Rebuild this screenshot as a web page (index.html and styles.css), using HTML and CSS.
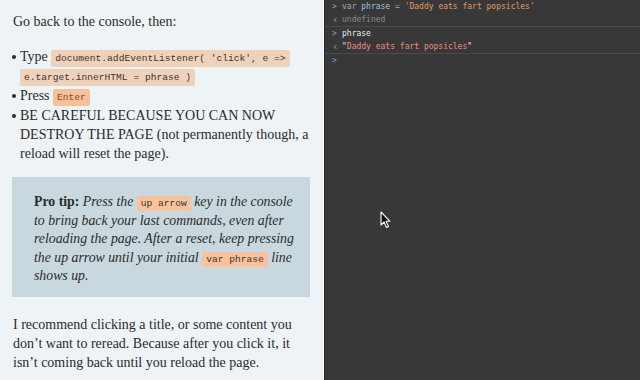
FILE: index.html
```html
<!DOCTYPE html>
<html>
<head>
<meta charset="utf-8">
<link rel="stylesheet" href="styles.css">
</head>
<body>
<div class="app">
  <main class="article">
    <p class="para first">Go back to the console, then:</p>
    <ul class="steps">
      <li>Type <code class="chip">document.addEventListener( 'click', e =&gt; e.target.innerHTML = phrase )</code></li>
      <li>Press <code class="chip key">Enter</code></li>
      <li>BE CAREFUL BECAUSE YOU CAN NOW DESTROY THE PAGE (not permanently though, a reload will reset the page).</li>
    </ul>
    <aside class="tip">
      <p><strong>Pro tip:</strong> Press the <code class="chip warm">up arrow</code> key in the console to bring back your last commands, even after reloading the page. After a reset, keep pressing the up arrow until your initial <code class="chip warm">var phrase</code> line shows up.</p>
    </aside>
    <p class="para">I recommend clicking a title, or some content you don’t want to reread. Because after you click it, it isn’t coming back until you reload the page.</p>
  </main>
  <section class="console">
    <div class="row"><span class="pr">&gt;</span><span><span class="kw">var</span> <span class="var">phrase</span> <span class="kw">=</span> <span class="str">'Daddy eats fart popsicles'</span></span></div>
    <div class="row sep"><span class="pr back">&lsaquo;</span><span class="undef">undefined</span></div>
    <div class="row"><span class="pr">&gt;</span><span class="plain">phrase</span></div>
    <div class="row sep"><span class="pr back">&lsaquo;</span><span><span class="plain">"</span><span class="res">Daddy eats fart popsicles</span><span class="plain">"</span></span></div>
    <div class="row"><span class="pr blue">&gt;</span><span></span></div>
    <svg class="cursor" width="12" height="18" viewBox="0 0 12 18"><path d="M1 1 L1 14 L4 11 L6.5 16.5 L8.5 15.5 L6 10.3 L10 10.3 Z" fill="#111" stroke="#fff" stroke-width="1.1" stroke-linejoin="round"/></svg>
  </section>
</div>
</body>
</html>
```
FILE: styles.css
```css
html, body {
  margin: 0;
  padding: 0;
  height: 380px;
  overflow: hidden;
}
.app {
  display: flex;
  width: 640px;
  height: 380px;
}
.article {
  width: 299px;
  flex: none;
  background: #eef3f6;
  padding: 0 11px 0 13px;
  border-right: 1px solid #ffffff;
  font-family: "Liberation Serif", "DejaVu Serif", serif;
  font-size: 14px;
  line-height: 19px;
  color: #2b2b2b;
  overflow: hidden;
}
.para {
  margin: 0;
}
.para.first {
  margin-top: 12px;
  margin-bottom: 16px;
}
.steps {
  margin: 0 0 14px 0;
  padding: 0 0 0 7px;
  list-style: none;
}
.steps li {
  position: relative;
  margin-bottom: 1px;
}
.steps li::before {
  content: "";
  position: absolute;
  left: -8px;
  top: 8px;
  width: 4px;
  height: 4px;
  border-radius: 50%;
  background: #2b2b2b;
}
.chip {
  font-family: "Liberation Mono", "DejaVu Sans Mono", monospace;
  font-size: 9.6px;
  line-height: 14px;
  padding: 3px 4px;
  background: #f0d2bb;
  color: #3a3530;
  border-radius: 2px;
  -webkit-box-decoration-break: clone;
  box-decoration-break: clone;
}
.chip.key {
  background: #f6c199;
  color: #8c4a1f;
}
.chip.warm {
  background: #f8c39c;
  color: #3a3530;
  font-style: normal;
  padding: 2px 4px;
}
.tip {
  margin: 0 0 18px -1px;
  width: 266px;
  padding: 16px 10px 11px 22px;
  background: #c8d8de;
}
.tip p {
  margin: 0;
  font-size: 13.8px;
  line-height: 18.5px;
  font-style: italic;
}
.tip strong {
  font-weight: bold;
  font-style: normal;
}
.console {
  position: relative;
  flex: 1;
  background: #383838;
  border-left: 1px solid #2a2a2a;
  font-family: "DejaVu Sans Mono", "Liberation Mono", monospace;
  font-size: 8px;
  line-height: 13px;
}
.row {
  display: flex;
  align-items: center;
  height: 13px;
  padding-left: 7px;
}
.row.sep {
  border-bottom: 1px solid #4a4a4a;
}
.pr {
  width: 10px;
  flex: none;
  color: #9a9a9a;
  font-size: 8px;
}
.pr.back {
  font-size: 11px;
}
.pr.blue {
  color: #6f9fd8;
}
.kw { color: #a8a8a8; }
.var { color: #9cc0e0; }
.str { color: #e09a6a; }
.undef { color: #8a8a8a; }
.plain { color: #e8e8e8; }
.res { color: #f08a7e; }
.cursor {
  position: absolute;
  left: 55px;
  top: 211px;
}
```
